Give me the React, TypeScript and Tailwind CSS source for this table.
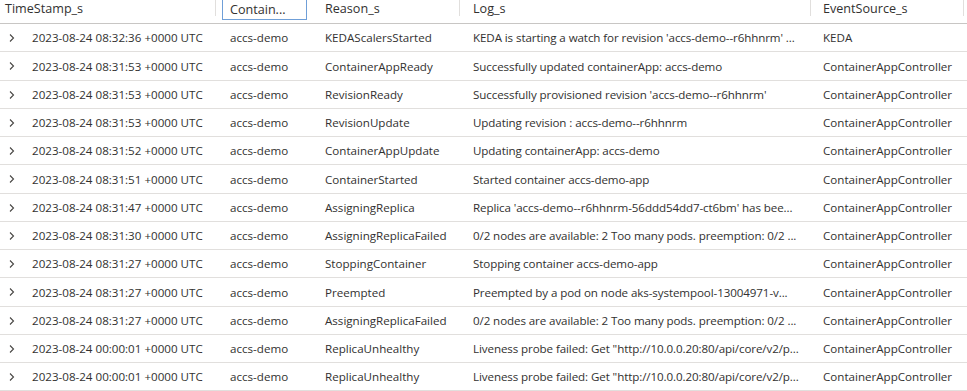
const rows = [
  ["2023-08-24 08:32:36 +0000 UTC", "KEDAScalersStarted", "KEDA is starting a watch for revision 'accs-demo--r6hhnrm' ...", "KEDA"],
  ["2023-08-24 08:31:53 +0000 UTC", "ContainerAppReady", "Successfully updated containerApp: accs-demo", "ContainerAppController"],
  ["2023-08-24 08:31:53 +0000 UTC", "RevisionReady", "Successfully provisioned revision 'accs-demo--r6hhnrm'", "ContainerAppController"],
  ["2023-08-24 08:31:53 +0000 UTC", "RevisionUpdate", "Updating revision : accs-demo--r6hhnrm", "ContainerAppController"],
  ["2023-08-24 08:31:52 +0000 UTC", "ContainerAppUpdate", "Updating containerApp: accs-demo", "ContainerAppController"],
  ["2023-08-24 08:31:51 +0000 UTC", "ContainerStarted", "Started container accs-demo-app", "ContainerAppController"],
  ["2023-08-24 08:31:47 +0000 UTC", "AssigningReplica", "Replica 'accs-demo--r6hhnrm-56ddd54dd7-ct6bm' has bee...", "ContainerAppController"],
  ["2023-08-24 08:31:30 +0000 UTC", "AssigningReplicaFailed", "0/2 nodes are available: 2 Too many pods. preemption: 0/2 ...", "ContainerAppController"],
  ["2023-08-24 08:31:27 +0000 UTC", "StoppingContainer", "Stopping container accs-demo-app", "ContainerAppController"],
  ["2023-08-24 08:31:27 +0000 UTC", "Preempted", "Preempted by a pod on node aks-systempool-13004971-v...", "ContainerAppController"],
  ["2023-08-24 08:31:27 +0000 UTC", "AssigningReplicaFailed", "0/2 nodes are available: 2 Too many pods. preemption: 0/2 ...", "ContainerAppController"],
  ["2023-08-24 00:00:01 +0000 UTC", "ReplicaUnhealthy", "Liveness probe failed: Get \"http://10.0.0.20:80/api/core/v2/p...", "ContainerAppController"],
  ["2023-08-24 00:00:01 +0000 UTC", "ReplicaUnhealthy", "Liveness probe failed: Get \"http://10.0.0.20:80/api/core/v2/p...", "ContainerAppController"],
];

function Sep() {
  return <span className="ml-auto h-[16px] w-px self-start bg-[#e1dfdd]" />;
}

export default function App() {
  return (
    <div
      className="h-[391px] w-[967px] overflow-hidden bg-white text-[11.6px] text-[#323130]"
      style={{ fontFamily: '"Segoe UI", "Open Sans", sans-serif' }}
    >
      {/* header */}
      <div className="flex h-[24px] border-b border-[#c8c6c4] text-[12.6px]">
        <div className="flex w-[216px] pl-[5px]">
          <span className="leading-[18px]">TimeStamp_s</span>
          <Sep />
        </div>
        <div className="w-[91px] pl-[6px]">
          <div className="-mt-px h-[21px] border border-[#6f9fd8] pl-[7px] leading-[19px]">Contain...</div>
        </div>
        <div className="flex w-[153px] pl-[18px]">
          <span className="leading-[18px]">Reason_s</span>
          <Sep />
        </div>
        <div className="flex w-[351px] pl-[13px]">
          <span className="leading-[18px]">Log_s</span>
          <Sep />
        </div>
        <div className="flex w-[153px] pl-[12px]">
          <span className="leading-[18px]">EventSource_s</span>
          <Sep />
        </div>
      </div>
      {rows.map((r, i) => (
        <div key={i} className="flex h-[28.25px] items-center border-b border-[#e1dfdd] pt-px">
          <div className="flex w-[216px] items-center">
            <svg width="16" height="16" viewBox="0 0 16 16" className="ml-[4px] mr-[12px] text-[#484644]">
              <path d="M6 4.5 L9.5 8 L6 11.5" fill="none" stroke="currentColor" strokeWidth="1.1" />
            </svg>
            <span>{r[0]}</span>
          </div>
          <div className="w-[91px] pl-[14px]">accs-demo</div>
          <div className="w-[153px] pl-[18px] whitespace-nowrap">{r[1]}</div>
          <div className="w-[351px] whitespace-nowrap pl-[13px] tracking-[-0.1px]">{r[2]}</div>
          <div className="flex-1 pl-[12px] whitespace-nowrap">{r[3]}</div>
        </div>
      ))}
    </div>
  );
}
